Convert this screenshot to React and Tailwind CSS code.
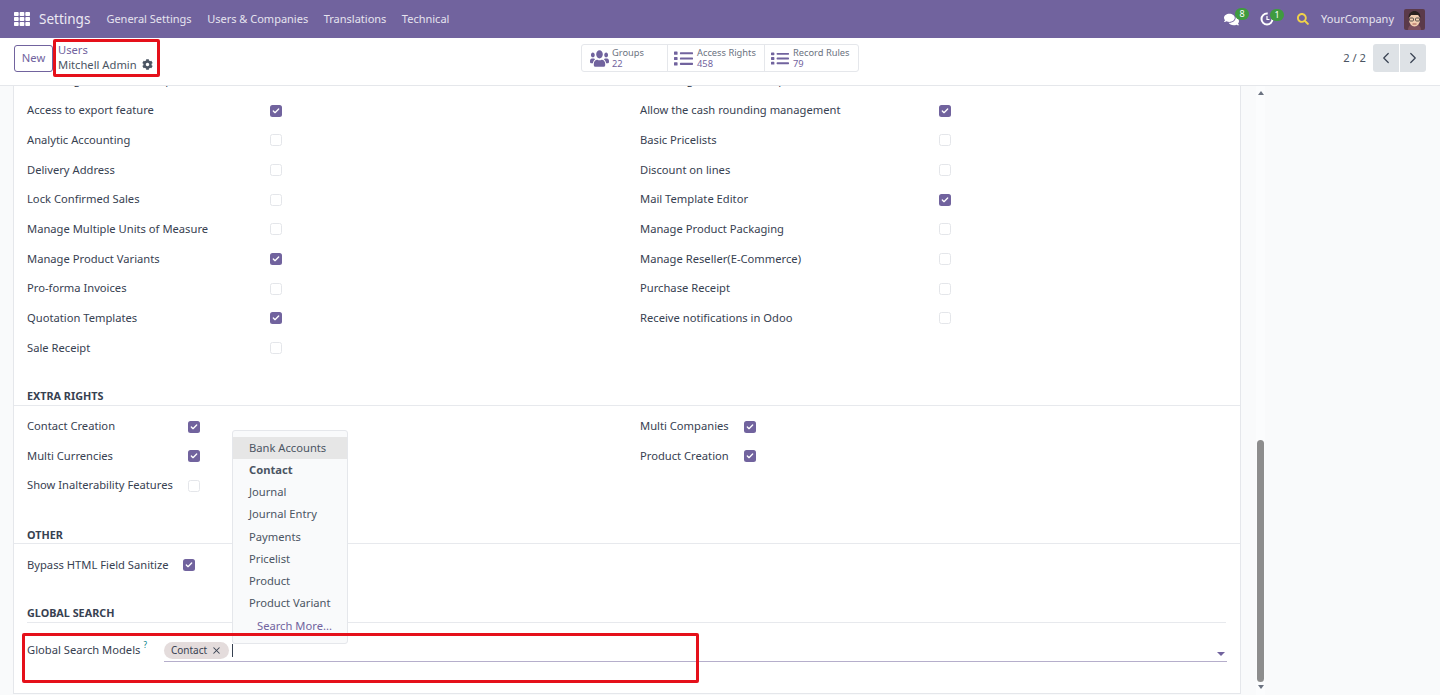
import React from 'react';
import { Check, ChevronLeft, ChevronRight, X } from 'lucide-react';
import { FaCog, FaComments, FaUsers, FaList, FaSearch, FaTh } from 'react-icons/fa';

const salesLeft = [
  ['Access to export feature', true],
  ['Analytic Accounting', false],
  ['Delivery Address', false],
  ['Lock Confirmed Sales', false],
  ['Manage Multiple Units of Measure', false],
  ['Manage Product Variants', true],
  ['Pro-forma Invoices', false],
  ['Quotation Templates', true],
  ['Sale Receipt', false],
];

const salesRight = [
  ['Allow the cash rounding management', true],
  ['Basic Pricelists', false],
  ['Discount on lines', false],
  ['Mail Template Editor', true],
  ['Manage Product Packaging', false],
  ['Manage Reseller(E-Commerce)', false],
  ['Purchase Receipt', false],
  ['Receive notifications in Odoo', false],
];

const menuItems = ['Journal', 'Journal Entry', 'Payments', 'Pricelist', 'Product', 'Product Variant'];

const Box = ({ checked }) =>
  checked ? (
    <span className="flex h-[12px] w-[12px] items-center justify-center rounded-[2.5px] bg-[#71639e]">
      <Check size={8} strokeWidth={4} className="text-white" />
    </span>
  ) : (
    <span className="block h-[12px] w-[12px] rounded-[2.5px] border border-[#e4e6ea] bg-white" />
  );

const Row = ({ label, checked, labelWidth }) => (
  <div className="flex h-[29.7px] items-center">
    <span className={`shrink-0 ${labelWidth}`}>{label}</span>
    <Box checked={checked} />
  </div>
);

const SectionTitle = ({ children, className }) => (
  <div className={`border-b border-[#e7e9ed] text-[10.8px] font-bold text-[#374151] ${className}`}>{children}</div>
);

const StatButton = ({ icon, label, value, className }) => (
  <div className={`flex h-full items-center ${className}`}>
    {icon}
    <div className="flex flex-col text-[9.3px] leading-[11px]">
      <span className="text-[#6b7280]">{label}</span>
      <span className="text-[#71639e]">{value}</span>
    </div>
  </div>
);

const App = () => {
  return (
    <div className="relative flex h-[695px] w-[1440px] flex-col overflow-hidden bg-white font-['Noto_Sans',sans-serif] text-[11.2px] text-[#374151]">
      {/* top navbar */}
      <header className="flex h-[38px] shrink-0 items-center bg-[#71639e] text-white">
        <FaTh size={16} className="ml-[14px] text-white" />
        <span className="ml-[9px] text-[13.5px] text-[#ece9f3]">Settings</span>
        <nav className="ml-[16px] flex gap-[15.5px] text-[11px] text-[#e6e3ef]">
          <span>General Settings</span>
          <span>Users &amp; Companies</span>
          <span>Translations</span>
          <span>Technical</span>
        </nav>
        <div className="ml-auto flex items-center">
          <span className="relative">
            <FaComments size={15} />
            <span className="absolute -right-[10px] -top-[4px] flex h-[12px] w-[14px] items-center justify-center rounded-full bg-[#3f9b3f] text-[9px]">8</span>
          </span>
          <span className="relative ml-[21px]">
            <svg className="block" width="14" height="14" viewBox="0 0 14 14" fill="none">
              <circle cx="7" cy="7" r="5.5" stroke="white" strokeWidth="2" strokeDasharray="26 9" />
              <path d="M7 4v3.5h2.5" stroke="white" strokeWidth="1.2" />
            </svg>
            <span className="absolute -right-[10px] -top-[3px] flex h-[12px] w-[14px] items-center justify-center rounded-full bg-[#3f9b3f] text-[9px]">1</span>
          </span>
          <FaSearch size={12} className="ml-[23px] text-[#f0d24a]" />
          <span className="ml-[12px] text-[11px] text-[#e6e3ef]">YourCompany</span>
          <svg className="ml-[10px] mr-[15px]" width="21" height="21" viewBox="0 0 21 21">
            <rect width="21" height="21" rx="2" fill="#5b3a4a" />
            <path d="M4 21c0-4 3-6 6.5-6S17 17 17 21z" fill="#7a4f5e" />
            <ellipse cx="10.5" cy="11" rx="5.5" ry="6.5" fill="#f1cdb0" />
            <path d="M4.5 9c0-5 3-7 6-7s6 2 6 7l-2-3H7z" fill="#2a2220" />
            <rect x="5.5" y="9" width="4" height="3" rx="1" fill="none" stroke="#333" strokeWidth="0.8" />
            <rect x="11.5" y="9" width="4" height="3" rx="1" fill="none" stroke="#333" strokeWidth="0.8" />
            <path d="M8.5 15h4" stroke="#a3574f" strokeWidth="1" />
          </svg>
        </div>
      </header>

      {/* control panel */}
      <div className="flex h-[48px] shrink-0 items-center border-b border-[#e5e7eb] bg-white pb-[7px]">
        <button className="ml-[14px] h-[27px] w-[39px] rounded-[3px] border border-[#71639e] text-[11.2px] text-[#71639e]">New</button>
        <div className="-mt-[3px] ml-[5px] flex w-[100px] flex-col leading-[15px]">
          <span className="text-[#71639e]">Users</span>
          <span className="flex items-center gap-[5px] text-[#4b5563]">
            Mitchell Admin <FaCog size={11} />
          </span>
        </div>
        <div className="ml-[423px] flex h-[28px] w-[278px] rounded-[3px] border border-[#e5e7eb]">
          <StatButton
            className="w-[86px] gap-[3px] border-r border-[#e5e7eb] pl-2"
            label="Groups"
            value="22"
            icon={<FaUsers preserveAspectRatio="none" className="h-[19px] w-[19px] text-[#71639e]" />}
          />
          <StatButton
            className="w-[97px] gap-[4px] border-r border-[#e5e7eb] pl-[6px]"
            label="Access Rights"
            value="458"
            icon={<FaList preserveAspectRatio="none" className="h-[17px] w-[19px] text-[#71639e]" />}
          />
          <StatButton
            className="w-[93px] gap-[4px] pl-[6px]"
            label="Record Rules"
            value="79"
            icon={<FaList preserveAspectRatio="none" className="h-[15px] w-[18px] text-[#71639e]" />}
          />
        </div>
        <span className="ml-auto text-[#4b5563]">2 / 2</span>
        <div className="ml-[7px] mr-[14px] flex h-[28px] gap-px">
          <span className="flex w-[26px] items-center justify-center rounded-l-[3px] bg-[#dee2e6] text-[#374151]"><ChevronLeft size={18} strokeWidth={1.6} /></span>
          <span className="flex w-[26px] items-center justify-center rounded-r-[3px] bg-[#dee2e6] text-[#374151]"><ChevronRight size={18} strokeWidth={1.6} /></span>
        </div>
      </div>

      {/* scrolled content */}
      <main className="flex min-h-0 flex-1 overflow-hidden bg-[#f9fafb]">
        <div className="mb-px ml-[13px] w-[1228px] shrink-0 border-x border-b border-[#e5e7eb] bg-white">
          <div className="-mt-[20px] grid grid-cols-[613px_1fr] pl-[13px]">
            <div>
              <div className="flex h-[29.7px] items-center">A warning can be set on a partner (Account)</div>
              {salesLeft.map(([label, checked]) => (
                <Row key={label} label={label} checked={checked} labelWidth="w-[243px]" />
              ))}
            </div>
            <div>
              <div className="flex h-[29.7px] items-center">A warning can be set on a product or a customer (Sale)</div>
              {salesRight.map(([label, checked]) => (
                <Row key={label} label={label} checked={checked} labelWidth="w-[299px]" />
              ))}
            </div>
          </div>

          <SectionTitle className="mt-[25.5px] h-[18px] pl-[13px]">EXTRA RIGHTS</SectionTitle>
          <div className="mt-[5.3px] grid grid-cols-[613px_1fr] pl-[13px]">
            <div>
              <Row label="Contact Creation" checked labelWidth="w-[161px]" />
              <Row label="Multi Currencies" checked labelWidth="w-[161px]" />
              <Row label="Show Inalterability Features" checked={false} labelWidth="w-[161px]" />
            </div>
            <div>
              <Row label="Multi Companies" checked labelWidth="w-[104px]" />
              <Row label="Product Creation" checked labelWidth="w-[104px]" />
            </div>
          </div>

          <SectionTitle className="mt-[25.7px] h-[18px] pl-[13px] pt-px">OTHER</SectionTitle>
          <div className="mt-[6px] pl-[13px]">
            <Row label="Bypass HTML Field Sanitize" checked labelWidth="w-[156px]" />
          </div>

          <SectionTitle className="mx-[13px] mt-[25px] h-[18px] w-[1199px]">GLOBAL SEARCH</SectionTitle>
          <div className="mt-[19px] flex pl-[13px]">
            <span className="flex h-[17px] w-[137px] shrink-0 items-start">
              Global Search Models
              <span className="-mt-[3px] ml-[3px] text-[8px] text-[#017e84]">?</span>
            </span>
            <div className="relative -mt-px flex h-[21px] w-[1063px] items-start border-b-[1.5px] border-[#b5aecb] pt-px">
              <span className="flex h-[17px] w-[65px] items-center justify-center gap-[4px] rounded-full bg-[#e4dcdc] text-[10px] text-[#374151]">
                Contact <X size={11} strokeWidth={2.2} />
              </span>
              <span className="ml-[3px] mt-[2px] h-[13px] w-px bg-[#374151]" />
              <span className="absolute bottom-[5px] right-[2px] h-0 w-0 border-x-[4px] border-t-[4px] border-x-transparent border-t-[#71639e]" />
            </div>
          </div>
        </div>

        {/* scrollbar */}
        <div className="ml-[15px] flex h-full w-[9px] shrink-0 flex-col items-center bg-[#fbfcfd]">
          <span className="mt-[5px] h-0 w-0 border-x-[3.5px] border-b-[4px] border-x-transparent border-b-[#6b7280]" />
          <div className="mt-[345px] h-[242px] w-[7px] rounded-full bg-[#8d8d8d]" />
          <span className="mt-[3px] h-0 w-0 border-x-[3.5px] border-t-[4px] border-x-transparent border-t-[#6b7280]" />
        </div>
      </main>

      {/* many2one dropdown */}
      <div className="absolute left-[232px] top-[430px] h-[214px] w-[116px] rounded-[3px] border border-[#e5e7eb] bg-[#f9fafb] pt-[6px] text-[#4b5563]">
        <div className="flex h-[22.25px] items-center bg-[#e6e6e6] pl-[16px]">Bank Accounts</div>
        <div className="flex h-[22.25px] items-center pl-[16px] font-bold">Contact</div>
        {menuItems.map((item) => (
          <div key={item} className="flex h-[22.25px] items-center pl-[16px]">{item}</div>
        ))}
        <div className="flex h-[22.25px] items-center pl-[24px] text-[#71639e]">Search More...</div>
      </div>

      {/* red annotation boxes */}
      <div className="absolute left-[53px] top-[39px] h-[38px] w-[107px] rounded-[2px] border-[3px] border-[#e5101a]" />
      <div className="absolute left-[22px] top-[633px] h-[50px] w-[677px] rounded-[2px] border-[3px] border-[#e5101a]" />
    </div>
  );
};

export default App;
